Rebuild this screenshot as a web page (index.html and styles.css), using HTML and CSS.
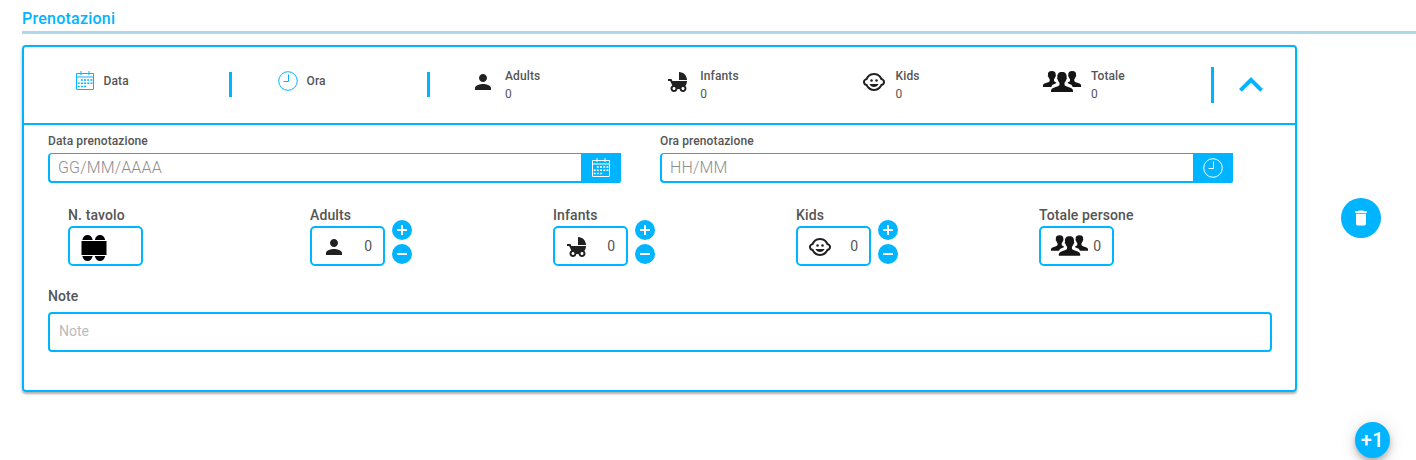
FILE: index.html
```
<!DOCTYPE html>
<html lang="it">
<head>
<meta charset="utf-8">
<title>Prenotazioni</title>
<link rel="stylesheet" href="styles.css">
</head>
<body>
<svg class="sprite" width="0" height="0" aria-hidden="true">
  <symbol id="person" viewBox="0 0 24 24"><path d="M12 12c2.21 0 4-1.79 4-4s-1.79-4-4-4-4 1.79-4 4 1.790 4 4 4zm0 2c-2.670 0-8 1.340-8 4v2h16v-2c0-2.660-5.330-4-8-4z"/></symbol>
  <symbol id="stroller" viewBox="0 0 24 24"><path d="M13 2v8h8c0-4.420-3.580-8-8-8zm6.320 13.890C20.370 14.540 21 12.840 21 11H6.440l-.95-2H2v2h2.220s1.890 4.070 2.120 4.420c-1.100.59-1.840 1.750-1.840 3.080C4.500 20.430 6.070 22 8 22c1.760 0 3.220-1.300 3.460-3h2.080c.24 1.700 1.700 3 3.460 3 1.930 0 3.500-1.570 3.500-3.500 0-1.040-.46-1.970-1.180-2.610zM8 20c-.83 0-1.500-.67-1.500-1.500S7.170 17 8 17s1.500.67 1.500 1.500S8.830 20 8 20zm9 0c-.83 0-1.500-.67-1.500-1.500s.67-1.500 1.500-1.500 1.500.67 1.500 1.500-.67 1.500-1.500 1.500z"/></symbol>
  <symbol id="child" viewBox="0 0 24 24"><circle cx="14.500" cy="10.500" r="1.250"/><circle cx="9.500" cy="10.500" r="1.250"/><path d="M22.940 12.660c.04-.21.06-.43.06-.66s-.02-.45-.06-.66c-.25-1.510-1.360-2.740-2.810-3.170-.53-1.120-1.280-2.100-2.190-2.910C16.360 3.850 14.280 3 12 3s-4.360.85-5.940 2.260c-.92.81-1.670 1.800-2.190 2.910-1.450.43-2.560 1.650-2.810 3.170-.04.21-.06.43-.06.66s.02.45.06.66c.25 1.510 1.360 2.740 2.810 3.170.52 1.110 1.270 2.090 2.170 2.890C7.620 20.140 9.710 21 12 21s4.380-.86 5.970-2.280c.9-.8 1.650-1.790 2.170-2.890 1.440-.43 2.550-1.650 2.800-3.170zM19 14c-.1 0-.19-.02-.29-.03-.2.67-.49 1.290-.86 1.860C16.600 17.740 14.450 19 12 19s-4.600-1.260-5.850-3.170c-.37-.57-.66-1.190-.86-1.860-.1.01-.19.03-.29.03-1.100 0-2-.9-2-2s.9-2 2-2c.1 0 .19.02.29.03.2-.67.49-1.290.86-1.860C7.400 6.260 9.550 5 12 5s4.600 1.260 5.850 3.170c.37.57.66 1.190.86 1.860.1-.01.19-.03.29-.03 1.100 0 2 .9 2 2s-.9 2-2 2zM7.500 14c.76 1.770 2.490 3 4.500 3s3.740-1.230 4.500-3h-9z"/></symbol>
  <symbol id="group" viewBox="0 0 38 21">
    <path d="M0 16v-2c.2-1.400 2.300-1.900 4.500-2.600 1.400-.5 2.200-.9 2.200-2V8.300C5.900 7.500 5.600 6.600 5.400 5.700 4.800 5.500 4.600 4.400 5 4 4.600 1.500 6 0 8.800 0s4.200 1.500 3.900 4c.4.400.2 1.500-.4 1.700-.2.900-.5 1.800-1.300 2.600v1.400c.2.700 1 1.200 2.100 1.700 .6.300.4.700-.6 1.100-2.500.9-3.700 1.600-4.200 3.500z"/>
    <path d="M38 16v-2c-.2-1.400-2.300-1.900-4.500-2.600-1.400-.5-2.200-.9-2.200-2V8.300c.8-.8 1.100-1.700 1.300-2.600.6-.2.800-1.300.4-1.700.4-2.500-1-4-3.800-4s-4.200 1.500-3.900 4c-.4.400-.2 1.500.4 1.700.2.900.5 1.800 1.300 2.600v1.400c-.2.700-1 1.200-2.100 1.700-.6.300-.4.700.6 1.100 2.500.9 3.700 1.600 4.200 3.500z"/>
    <path d="M8 21v-1.500c.2-1.900 2.300-2.800 5.500-3.800 2-.7 3-1.200 3-2.300v-1.600c-1-1-1.400-2-1.600-3.100-.8-.2-1-1.700-.5-2.100C14 2.900 15.600 1 19 1s5 1.900 4.600 5.600c.5.400.3 1.900-.5 2.100-.2 1.100-.6 2.100-1.600 3.100v1.600c0 1.100 1 1.600 3 2.300 3.200 1 5.300 1.900 5.500 3.800v1.500z"/>
  </symbol>
  <symbol id="calendar" viewBox="0 0 20 20">
    <path fill="none" stroke="currentColor" d="M1.500 2.500h17v15.600q0 .4-.4.400H1.900q-.4 0-.4-.4zM1.500 6h17M6 0v4M14 0v4"/>
    <path fill="none" stroke="currentColor" stroke-width="1.500" stroke-dasharray="2 1.200" d="M5.800 9h11.600M2.700 12.200h14.700M2.700 15.500h8.600"/>
  </symbol>
  <symbol id="clock" viewBox="0 0 20 20"><path fill="none" stroke="currentColor" d="M10 .7a9.300 9.300 0 1 0 0 18.600 9.300 9.300 0 1 0 0-18.600M10.500 3.500v7h-5"/></symbol>
  <symbol id="plus" viewBox="0 0 20 20"><path d="M9 5h2v4h4v2h-4v4H9v-4H5V9h4z"/></symbol>
  <symbol id="minus" viewBox="0 0 20 20"><path d="M5 9h10v2H5z"/></symbol>
</svg>

<h1 class="title">Prenotazioni</h1>
<main class="layout">
  <section class="card">
    <header class="summary">
      <div class="when when-date"><svg class="ic20"><use href="#calendar"/></svg><b>Data</b></div>
      <i class="bar"></i>
      <div class="when when-time"><svg class="ic20"><use href="#clock"/></svg><b>Ora</b></div>
      <i class="bar"></i>
      <div class="counts">
        <div class="count"><span class="slot"><svg class="ic24"><use href="#person"/></svg></span><p><b>Adults</b><span>0</span></p></div>
        <div class="count"><span class="slot"><svg class="ic24"><use href="#stroller"/></svg></span><p><b>Infants</b><span>0</span></p></div>
        <div class="count"><span class="slot"><svg class="ic24"><use href="#child"/></svg></span><p><b>Kids</b><span>0</span></p></div>
        <div class="count"><span class="slot"><svg class="group"><use href="#group"/></svg></span><p><b>Totale</b><span>0</span></p></div>
      </div>
      <i class="bar tall"></i>
      <svg class="chevron" viewBox="0 0 24 24"><path d="M12 8l-6 6 1.410 1.410L12 10.830l4.590 4.580L18 14z"/></svg>
    </header>
    <div class="body">
      <div class="dates">
        <div class="field"><label>Data prenotazione</label><div class="picker"><input placeholder="GG/MM/AAAA"><button><svg class="ic20"><use href="#calendar"/></svg></button></div></div>
        <div class="field"><label>Ora prenotazione</label><div class="picker"><input placeholder="HH/MM"><button><svg class="ic20"><use href="#clock"/></svg></button></div></div>
      </div>
      <div class="people">
        <div class="cell"><label>N. tavolo</label><div class="row"><div class="box table"><svg width="26" height="26" viewBox="0 0 26 26"><path d="M.5 6h25v14H.5zM1.300 5Q2.500 0 6.500 0t5.200 5zM13.800 5q1.200-5 5.200-5t5.200 5zM1.300 21q1.200 5 5.200 5t5.200-5zM13.800 21q1.200 5 5.200 5t5.200-5z"/></svg></div></div></div>
        <div class="cell"><label>Adults</label><div class="row"><div class="box"><svg class="ic24"><use href="#person"/></svg><span>0</span></div><div class="steps"><button><svg><use href="#plus"/></svg></button><button><svg><use href="#minus"/></svg></button></div></div></div>
        <div class="cell"><label>Infants</label><div class="row"><div class="box"><svg class="ic24"><use href="#stroller"/></svg><span>0</span></div><div class="steps"><button><svg><use href="#plus"/></svg></button><button><svg><use href="#minus"/></svg></button></div></div></div>
        <div class="cell"><label>Kids</label><div class="row"><div class="box"><svg class="ic24"><use href="#child"/></svg><span>0</span></div><div class="steps"><button><svg><use href="#plus"/></svg></button><button><svg><use href="#minus"/></svg></button></div></div></div>
        <div class="cell"><label>Totale persone</label><div class="row"><div class="box total"><svg class="group"><use href="#group"/></svg><span>0</span></div></div></div>
      </div>
      <label class="note-label">Note</label>
      <input class="note" placeholder="Note">
    </div>
  </section>
  <button class="trash"><svg width="20" height="20" viewBox="0 0 24 24"><path d="M6 19c0 1.100.9 2 2 2h8c1.100 0 2-.9 2-2V7H6v12zM19 4h-3.500l-1-1h-5l-1 1H5v2h14V4z"/></svg></button>
</main>
<button class="add">+1</button>
</body>
</html>
```
FILE: styles.css
```
* { box-sizing: border-box; }
body {
  margin: 0;
  height: 460px;
  overflow: hidden;
  background: #fff;
  color: #555;
  font: 12px/18px Roboto, sans-serif;
}
b, label { font-weight: 500; color: #555; letter-spacing: .11px; }
svg { display: block; flex: none; }
.sprite { position: absolute; }
button {
  border: 0;
  padding: 0;
  background: #00b4ff;
  color: #fff;
  fill: #fff;
  display: flex;
  align-items: center;
  justify-content: center;
  font-family: inherit;
}
input { font-family: inherit; outline: 0; min-width: 0; background: #fff; }
.title {
  margin: 0 0 0 22px;
  padding-top: 7px;
  height: 34px;
  border-bottom: 3px solid #add8e6;
  color: #00b4ff;
  font-size: 16px;
  font-weight: 500;
  line-height: 24px;
  letter-spacing: .24px;
}
.layout { display: flex; padding: 11px 0 0 22px; }
.card {
  width: 1275px;
  height: 347px;
  border: 2px solid #00b4ff;
  border-radius: 4px;
  box-shadow: 0 2px 2px rgba(0, 0, 0, .25), 0 1px 5px rgba(0, 0, 0, .12);
}
.summary { display: flex; height: 78px; border-bottom: 2px solid #00b4ff; }
.when { display: flex; gap: 9px; padding-top: 24px; color: #00b4ff; }
.when b { line-height: 20px; }
.when-date { width: 205px; padding-left: 50.500px; }
.when-time { width: 195px; padding-left: 45.500px; }
.ic20 { width: 20px; height: 20px; }
.ic24 { width: 24px; height: 24px; fill: #212121; }
.group { width: 38px; height: 21px; fill: #151515; }
.bar { width: 3px; height: 25px; margin-top: 25px; background: #00b4ff; }
.bar.tall { height: 36px; margin-top: 20px; }
.counts { display: grid; grid-template-columns: repeat(4, 195.300px); width: 781px; padding: 20px 0 0 14px; }
.count { display: flex; gap: 10px; }
.slot { width: 51px; display: flex; justify-content: flex-end; padding-top: 3px; }
.slot .ic24 { margin-right: 0; }
.slot .group { margin-top: 1px; }
.count p { margin: 0; display: flex; flex-direction: column; }
.count span { color: #555; }
.chevron { width: 48px; height: 48px; margin: 14px 0 0 13px; fill: #00b4ff; }
.body { padding: 7px 23px 0 24px; }
.dates { display: flex; gap: 39px; }
.field { width: 573px; }
.field label { display: block; height: 21px; }
.picker { display: flex; height: 30px; }
.picker input {
  flex: 1;
  border: solid #00b4ff;
  border-width: 1px 0 2px 2px;
  border-radius: 4px 0 0 4px;
  padding: 0 8px;
  font-size: 16px;
  font-weight: 300;
  letter-spacing: .15px;
}
.picker button { width: 40px; border-radius: 0 0 2px 0; }
input::placeholder { color: #8e8e8e; opacity: 1; }
.people { display: grid; grid-template-columns: 242px repeat(4, 243px); margin: 23px 0 0 20px; font-size: 14px; }
.cell label { display: block; height: 20px; }
.row { display: flex; gap: 7px; }
.box {
  width: 75px;
  height: 40px;
  border: 2px solid #00b4ff;
  border-radius: 5px;
  display: flex;
  align-items: center;
  justify-content: space-between;
  padding: 2px 11px 0 10px;
}
.box span { margin-top: -2px; }
.table { padding: 3px 0 0 11px; fill: #000; }
.total { padding: 0 11px 0 10px; }
.total span { margin-top: 0; }
.total .group { width: 37px; margin-top: -1px; }
.steps { display: flex; flex-direction: column; gap: 4px; margin-top: -6px; }
.steps button { width: 20px; height: 20px; border-radius: 50%; }
.steps svg { width: 20px; height: 20px; }
.note-label { display: block; margin-top: 21px; font-size: 14px; height: 25px; }
.note {
  display: block;
  width: 1224px;
  height: 40px;
  border: 2px solid #00b4ff;
  border-radius: 4px;
  padding: 0 9px 2px;
  font-size: 14px;
}
.note::placeholder { color: #bbb; }
.trash { width: 40px; height: 40px; margin: 153px 0 0 44px; border-radius: 50%; }
.add {
  width: 35px;
  height: 36px;
  margin: 30px 0 0 1355px;
  border-radius: 50%;
  font-size: 20px;
  font-weight: 500;
  letter-spacing: .4px;
  box-shadow: 0 3px 5px -1px rgba(0, 0, 0, .2), 0 6px 10px rgba(0, 0, 0, .14), 0 1px 18px rgba(0, 0, 0, .12);
}
```
